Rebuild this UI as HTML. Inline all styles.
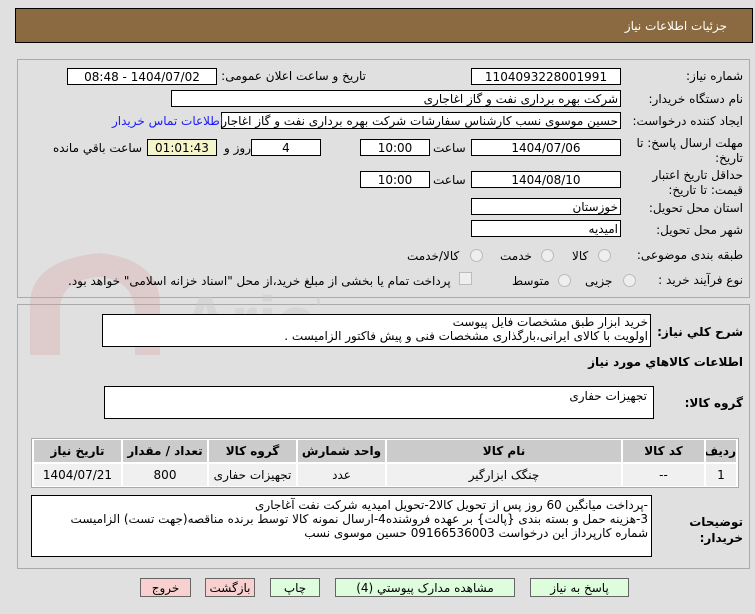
<!DOCTYPE html>
<html><head><meta charset="utf-8"><style>
body{margin:0;width:755px;height:614px;background:#e0e0e0;font-family:"DejaVu Sans","Liberation Sans",sans-serif;font-size:12px;color:#000;position:relative;overflow:hidden}
.a{position:absolute}
.box{position:absolute;background:#fff;border:1px solid #000;height:17px;line-height:17px;box-sizing:border-box;direction:rtl;padding:0 2px;white-space:nowrap;overflow:hidden}
.c{text-align:center}
.l{position:absolute;direction:rtl;white-space:nowrap}
.r{position:absolute;width:11px;height:11px;border:1px solid #bbb;border-radius:50%;background:#eee}
.btn{position:absolute;top:578px;height:19px;line-height:19px;border:1px solid #666;text-align:center;box-sizing:border-box}
table{border-collapse:separate;border-spacing:2px;table-layout:fixed}
td{text-align:center;height:22px;padding:0;overflow:hidden;white-space:nowrap}
</style></head><body>
<div class="a" style="left:15px;top:8px;width:738px;height:35px;background:#8b6a41;border:1px solid #000;box-sizing:border-box"></div>
<div class="l" style="right:28px;top:19px;color:#fff;font-size:12px">جزئیات اطلاعات نیاز</div>

<div class="a" style="left:17px;top:59px;width:733px;height:239px;border:1px solid #aaa;box-sizing:border-box"></div>
<div class="a" style="left:17px;top:304px;width:733px;height:265px;border:1px solid #aaa;box-sizing:border-box"></div>
<svg class="a" style="left:20px;top:245px" width="300" height="110"><g fill="#d9a0a0" opacity=".3"><path d="M10 60 Q10 15 80 8 Q140 15 140 60 L140 110 L115 110 L115 65 Q112 35 80 32 Q40 35 40 65 L40 110 L10 110Z"/></g><text x="160" y="100" font-size="70" font-family="Liberation Sans" font-weight="bold" fill="#c8c8c8" opacity=".4">AriaTender</text></svg>

<div class="l" style="right:12px;top:69px">شماره نیاز:</div>
<div class="box c" style="left:471px;top:68px;width:150px">1104093228001991</div>
<div class="l" style="right:389px;top:69px">تاریخ و ساعت اعلان عمومی:</div>
<div class="box c" style="left:67px;top:68px;width:150px">1404/07/02 - 08:48</div>

<div class="l" style="right:12px;top:92px">نام دستگاه خریدار:</div>
<div class="box" style="left:171px;top:90px;width:450px">شرکت بهره برداری نفت و گاز اغاجاری</div>

<div class="l" style="right:12px;top:114px">ایجاد کننده درخواست:</div>
<div class="box" style="left:221px;top:112px;width:400px">حسین موسوی نسب کارشناس سفارشات شرکت بهره برداری نفت و گاز اغاجار</div>
<div class="l" style="left:112px;top:114px;color:#1a1aff">اطلاعات تماس خریدار</div>

<div class="l" style="right:12px;top:136px;line-height:15px;text-align:right">مهلت ارسال پاسخ: تا<br>تاریخ:</div>
<div class="box c" style="left:471px;top:139px;width:150px">1404/07/06</div>
<div class="l" style="left:433px;top:141px">ساعت</div>
<div class="box c" style="left:360px;top:139px;width:70px">10:00</div>
<div class="box c" style="left:251px;top:139px;width:70px">4</div>
<div class="l" style="left:224px;top:141px">روز و</div>
<div class="box c" style="left:147px;top:139px;width:70px;background:#f5f5cc">01:01:43</div>
<div class="l" style="left:53px;top:141px">ساعت باقي مانده</div>

<div class="l" style="right:12px;top:168px;line-height:15px;text-align:right">حداقل تاریخ اعتبار<br>قیمت: تا تاریخ:</div>
<div class="box c" style="left:471px;top:171px;width:150px">1404/08/10</div>
<div class="l" style="left:433px;top:173px">ساعت</div>
<div class="box c" style="left:360px;top:171px;width:70px">10:00</div>

<div class="l" style="right:12px;top:201px">استان محل تحویل:</div>
<div class="box" style="left:471px;top:198px;width:150px">خوزستان</div>
<div class="l" style="right:12px;top:223px">شهر محل تحویل:</div>
<div class="box" style="left:471px;top:220px;width:150px">امیدیه</div>

<div class="l" style="right:12px;top:248px">طبقه بندی موضوعی:</div>
<div class="r" style="left:598px;top:249px"></div><div class="l" style="left:572px;top:249px">کالا</div>
<div class="r" style="left:541px;top:249px"></div><div class="l" style="left:500px;top:249px">خدمت</div>
<div class="r" style="left:470px;top:249px"></div><div class="l" style="left:407px;top:249px">کالا/خدمت</div>

<div class="l" style="right:12px;top:273px">نوع فرآیند خرید :</div>
<div class="r" style="left:623px;top:274px"></div><div class="l" style="left:585px;top:274px">جزیی</div>
<div class="r" style="left:558px;top:274px"></div><div class="l" style="left:512px;top:274px">متوسط</div>
<div class="a" style="left:459px;top:272px;width:11px;height:11px;border:1px solid #bbb;background:#eee"></div>
<div class="l" style="left:68px;top:274px">پرداخت تمام یا بخشی از مبلغ خرید،از محل "اسناد خزانه اسلامی" خواهد بود.</div>

<div class="l" style="right:12px;top:325px;font-weight:bold">شرح کلي نیاز:</div>
<div class="a" style="left:102px;top:314px;width:549px;height:33px;background:#fff;border:1px solid #000;direction:rtl;padding-right:2px;line-height:14px;box-sizing:border-box;white-space:nowrap;overflow:hidden">خرید ابزار طبق  مشخصات فایل پیوست<br>اولویت با کالای ایرانی،بارگذاری مشخصات فنی و پیش فاکتور الزامیست .</div>
<div class="l" style="right:12px;top:355px;font-weight:bold">اطلاعات کالاهاي مورد نیاز</div>

<div class="l" style="right:12px;top:396px;font-weight:bold">گروه کالا:</div>
<div class="a" style="left:104px;top:386px;width:550px;height:33px;background:#fff;border:1px solid #000;direction:rtl;padding:2px 6px;box-sizing:border-box">تجهیزات حفاری</div>

<div class="a" style="left:31px;top:438px;width:708px;height:50px;background:#fff;border:1px solid #aaa;box-sizing:border-box">
<table style="width:706px;direction:rtl;font-size:12px;position:absolute;left:0px;top:-1px">
<colgroup><col style="width:30px"><col style="width:81px"><col style="width:234px"><col style="width:87px"><col style="width:87px"><col style="width:84px"><col></colgroup>
<tr style="background:#cbcbcb;font-weight:bold"><td>ردیف</td><td>کد کالا</td><td>نام کالا</td><td>واحد شمارش</td><td>گروه کالا</td><td>تعداد / مقدار</td><td>تاریخ نیاز</td></tr>
<tr style="background:#f0f0f0"><td>1</td><td>--</td><td>چنگک ابزارگیر</td><td>عدد</td><td>تجهیزات حفاری</td><td>800</td><td>1404/07/21</td></tr>
</table></div>

<div class="l" style="right:12px;top:514px;line-height:16px;font-weight:bold;text-align:right">توضیحات<br>خریدار:</div>
<div class="a" style="left:31px;top:495px;width:621px;height:62px;background:#fff;border:1px solid #000;direction:rtl;padding:2px 3px;line-height:14px;box-sizing:border-box;white-space:nowrap;overflow:hidden">-پرداخت میانگین 60 روز پس از تحویل کالا2-تحویل امیدیه شرکت نفت آغاجاری<br>3-هزینه حمل  و بسته بندی {پالت} بر عهده فروشنده4-ارسال نمونه کالا توسط برنده مناقصه(جهت تست) الزامیست<br>شماره کارپرداز این درخواست 09166536003 حسین موسوی نسب</div>

<div class="btn" style="left:140px;width:51px;background:#f8d0d0">خروج</div>
<div class="btn" style="left:205px;width:50px;background:#f8d0d0">بازگشت</div>
<div class="btn" style="left:270px;width:50px;background:#ddfddd">چاپ</div>
<div class="btn" style="left:335px;width:180px;background:#ddfddd">مشاهده مدارک پیوستي (4)</div>
<div class="btn" style="left:530px;width:99px;background:#ddfddd">پاسخ به نیاز</div>
</body></html>
